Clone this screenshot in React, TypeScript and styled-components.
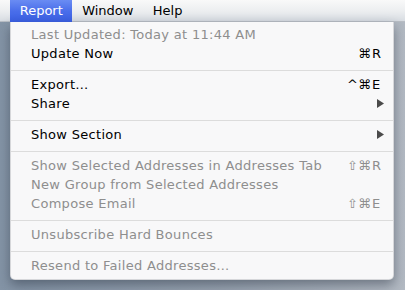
import React from "react";
import styled, { createGlobalStyle } from "styled-components";

const Global = createGlobalStyle`
  html, body { margin: 0; padding: 0; }
  body { font-family: "DejaVu Sans", "Liberation Sans", sans-serif; }
`;

const Screen = styled.div`
  width: 405px;
  height: 290px;
  overflow: hidden;
  background: linear-gradient(90deg, #8494a6 0%, #9aa5b2 55%, #b3bac3 100%);
  display: flex;
  flex-direction: column;
  font-family: "DejaVu Sans", "Liberation Sans", sans-serif;
  font-size: 13px;
`;

const MenuBar = styled.div`
  height: 22px;
  flex: none;
  display: flex;
  padding-left: 10px;
  background: linear-gradient(180deg, #f9f9f9 0%, #eceef0 50%, #d6dbe1 100%);
  box-shadow: inset 0 -1px 0 #b9bec5;
`;

const BarItem = styled.div<{ $active?: boolean }>`
  padding: 0 9.7px;
  line-height: 22px;
  color: ${(p) => (p.$active ? "#ffffff" : "#000000")};
  background: ${(p) =>
    p.$active ? "linear-gradient(180deg, #6a8cf3 0%, #4a6eea 50%, #3a5fe4 100%)" : "transparent"};
`;

const Menu = styled.div`
  margin-left: 10px;
  width: 384px;
  box-sizing: border-box;
  padding: 3px 0 4px;
  background: #f8f8f9;
  border: 1px solid rgba(60, 70, 80, 0.18);
  border-top: none;
  border-radius: 0 0 5px 5px;
  box-shadow: 0 5px 12px rgba(30, 40, 55, 0.45);
`;

const Row = styled.div<{ $disabled?: boolean }>`
  display: grid;
  grid-template-columns: 1fr auto 13px;
  align-items: center;
  height: 19px;
  line-height: 19px;
  padding: 0 9px 0 20px;
  color: ${(p) => (p.$disabled ? "#8e8e8e" : "#000000")};
  white-space: nowrap;
`;

const Label = styled.span`
  letter-spacing: 0.3px;
`;

const Mods = styled.span`
  text-align: right;
`;

const Key = styled.span`
  padding-left: 1px;
  display: flex;
  align-items: center;
  justify-content: flex-start;
`;

const ArrowWrap = styled.span`
  display: flex;
  align-items: center;
  justify-content: flex-end;
  width: 100%;
  padding-right: 1px;
`;

const Separator = styled.div`
  height: 1px;
  margin: 7px 0 4px;
  background: #dcdcdc;
`;

const Arrow = () => (
  <ArrowWrap>
    <svg width="7" height="9" viewBox="0 0 7 9">
      <polygon points="0,0 7,4.5 0,9" fill="#4b4b4b" />
    </svg>
  </ArrowWrap>
);

type Item =
  | { sep: true }
  | { label: string; mods?: string; keyName?: string; disabled?: boolean; submenu?: boolean };

const items: Item[] = [
  { label: "Last Updated: Today at 11:44 AM", disabled: true },
  { label: "Update Now", mods: "⌘", keyName: "R" },
  { sep: true },
  { label: "Export…", mods: "^⌘", keyName: "E" },
  { label: "Share", submenu: true },
  { sep: true },
  { label: "Show Section", submenu: true },
  { sep: true },
  { label: "Show Selected Addresses in Addresses Tab", mods: "⇧⌘", keyName: "R", disabled: true },
  { label: "New Group from Selected Addresses", disabled: true },
  { label: "Compose Email", mods: "⇧⌘", keyName: "E", disabled: true },
  { sep: true },
  { label: "Unsubscribe Hard Bounces", disabled: true },
  { sep: true },
  { label: "Resend to Failed Addresses…", disabled: true },
];

export default function App() {
  return (
    <>
      <Global />
      <Screen>
        <MenuBar>
          <BarItem $active>Report</BarItem>
          <BarItem>Window</BarItem>
          <BarItem>Help</BarItem>
        </MenuBar>
        <Menu>
          {items.map((it, i) =>
            "sep" in it ? (
              <Separator key={i} />
            ) : (
              <Row key={i} $disabled={it.disabled}>
                <Label>{it.label}</Label>
                <Mods>{it.mods ?? ""}</Mods>
                {it.submenu ? <Arrow /> : <Key>{it.keyName ?? ""}</Key>}
              </Row>
            )
          )}
        </Menu>
      </Screen>
    </>
  );
}
